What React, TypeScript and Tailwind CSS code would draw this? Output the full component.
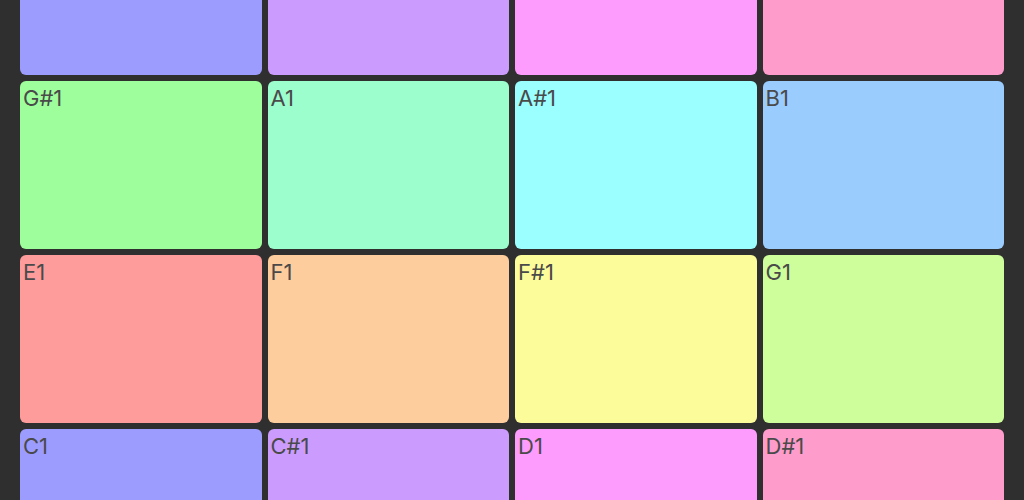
type Pad = { note: string; color: string };

const upperPads: Pad[] = [
  { note: 'C2', color: 'bg-[#9c9cfe]' },
  { note: 'C#2', color: 'bg-[#cb9cfe]' },
  { note: 'D2', color: 'bg-[#fe9cfe]' },
  { note: 'D#2', color: 'bg-[#fe9ccb]' },
];

const pads: Pad[] = [
  { note: 'G#1', color: 'bg-[#9dfe9b]' },
  { note: 'A1', color: 'bg-[#9dfecd]' },
  { note: 'A#1', color: 'bg-[#9bffff]' },
  { note: 'B1', color: 'bg-[#9bccfe]' },
  { note: 'E1', color: 'bg-[#fe9c9c]' },
  { note: 'F1', color: 'bg-[#fdcd9d]' },
  { note: 'F#1', color: 'bg-[#fdfc9b]' },
  { note: 'G1', color: 'bg-[#cdfe9b]' },
  { note: 'C1', color: 'bg-[#9c9cfe]' },
  { note: 'C#1', color: 'bg-[#cb9cfe]' },
  { note: 'D1', color: 'bg-[#fe9cfe]' },
  { note: 'D#1', color: 'bg-[#fe9ccb]' },
];

export default function App() {
  return (
    <main className="flex h-screen flex-col gap-1.5 overflow-hidden bg-[#2f2f2f] px-5 font-['Inter',sans-serif]">
      <div className="grid shrink-0 grid-cols-4 gap-1.5">
        {upperPads.map((pad) => (
          <button
            key={pad.note}
            type="button"
            aria-label={pad.note}
            className={`h-[75px] rounded-b-md ${pad.color}`}
          />
        ))}
      </div>
      <div className="grid shrink-0 grid-cols-4 gap-1.5">
        {pads.map((pad) => (
          <button
            key={pad.note}
            type="button"
            className={`flex h-42 items-start rounded-md px-[3px] pt-[3px] text-left text-[22px] leading-7 text-[#4a4a4a] ${pad.color}`}
          >
            {pad.note}
          </button>
        ))}
      </div>
    </main>
  );
}
